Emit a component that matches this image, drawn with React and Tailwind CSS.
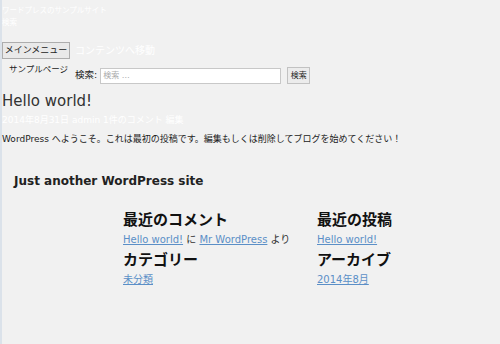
export default function App() {
  const font = { fontFamily: '"DejaVu Sans", Verdana, "Noto Sans CJK JP", sans-serif' };
  return (
    <div className="min-h-[344px] w-[500px] bg-[#f1f1f1] border-l-2 border-[#dbe2ea] text-[#333]" style={font}>
      <header className="pt-[5px]">
        <p className="text-[7.5px] leading-[12px] text-white">ワードプレスのサンプルサイト</p>
        <p className="text-[7.5px] leading-[12px] text-white">検索</p>
      </header>
      <nav className="mt-[13px] flex items-center">
        <button className="h-[17px] w-[68px] bg-[#e9e9e9] border border-[#adadad] text-[9px] leading-none text-[#222]">メインメニュー</button>
        <span className="ml-[5px] text-[10px] text-white">コンテンツへ移動</span>
      </nav>
      <div className="flex items-start">
        <span className="ml-[7px] mt-[5px] text-[8.5px] leading-[10px] text-[#222]">サンプルページ</span>
        <form className="ml-[7px] mt-[8px] flex items-center">
          <label className="text-[9.5px] text-[#222]">検索:</label>
          <input
            placeholder="検索 …"
            className="ml-[3px] h-[16px] w-[181px] bg-white border border-[#c8c8c8] px-[2px] text-[8px] placeholder:text-[#aaa] outline-none"
          />
          <button className="ml-[6px] h-[17px] w-[23px] bg-[#ececec] border border-[#c2c2c2] text-[8px] leading-none text-[#222]">検索</button>
        </form>
      </div>
      <article className="mt-[7px]">
        <h1 className="text-[15px] leading-[20px] text-[#333]">Hello world!</h1>
        <p className="mt-[3px] text-[9px] leading-[12px] text-white">2014年8月31日 admin 1件のコメント 編集</p>
        <p className="mt-[7px] text-[9px] leading-[12px] text-[#222]">WordPress へようこそ。これは最初の投稿です。編集もしくは削除してブログを始めてください！</p>
      </article>
      <footer className="mt-[28px] pl-[12px]">
        <p className="text-[12px] font-bold leading-[16px] text-[#222]">Just another WordPress site</p>
      </footer>
      <div className="mt-[21px] ml-[121px] grid grid-cols-[194px_1fr]">
        <div>
          <h2 className="text-[15px] font-bold leading-[20px] text-[#111]">最近のコメント</h2>
          <p className="text-[10px] leading-[20px] text-[#333]">
            <a className="text-[#5b8fc7] underline">Hello world!</a> に <a className="text-[#5b8fc7] underline">Mr WordPress</a> より
          </p>
          <h2 className="text-[15px] font-bold leading-[20px] text-[#111]">カテゴリー</h2>
          <p className="text-[10px] leading-[20px]">
            <a className="text-[#5b8fc7] underline">未分類</a>
          </p>
        </div>
        <div>
          <h2 className="text-[15px] font-bold leading-[20px] text-[#111]">最近の投稿</h2>
          <p className="text-[10px] leading-[20px]">
            <a className="text-[#5b8fc7] underline">Hello world!</a>
          </p>
          <h2 className="text-[15px] font-bold leading-[20px] text-[#111]">アーカイブ</h2>
          <p className="text-[10px] leading-[20px]">
            <a className="text-[#5b8fc7] underline">2014年8月</a>
          </p>
        </div>
      </div>
    </div>
  );
}
